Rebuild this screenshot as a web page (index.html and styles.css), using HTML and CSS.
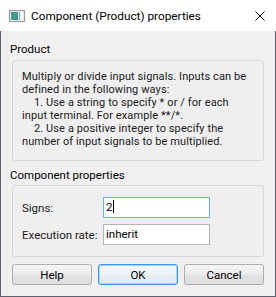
FILE: index.html
```html
<!DOCTYPE html>
<html lang="en">
<head>
  <meta charset="UTF-8">
  <title>Component (Product) properties</title>
  <link rel="stylesheet" href="styles.css">
</head>
<body>
  <div class="window">
    <div class="titlebar">
      <svg class="app-icon" width="16" height="12" viewBox="0 0 16 12">
        <defs>
          <linearGradient id="pane" x1="0" y1="0" x2="1" y2="1">
            <stop offset="0" stop-color="#3f8fc0"/>
            <stop offset="0.5" stop-color="#4aa37a"/>
            <stop offset="1" stop-color="#2f7fb0"/>
          </linearGradient>
        </defs>
        <rect x="0.5" y="0.5" width="15" height="11" fill="#e9e9e9" stroke="#9a9a9a"/>
        <rect x="2" y="2" width="7" height="8" fill="url(#pane)"/>
        <rect x="10" y="2" width="4" height="8" fill="#ffffff"/>
        <rect x="10" y="2" width="1" height="8" fill="#6aa0c8"/>
      </svg>
      <span class="title">Component (Product) properties</span>
      <svg class="close" width="10" height="10" viewBox="0 0 10 10">
        <path d="M0.5 0.5 L9.5 9.5 M9.5 0.5 L0.5 9.5" stroke="#000" stroke-width="1"/>
      </svg>
    </div>

    <div class="content">
      <div class="group-label">Product</div>
      <div class="groupbox info">
        <div class="line">Multiply or divide input signals. Inputs can be</div>
        <div class="line">defined in the following ways:</div>
        <div class="line indent">1. Use a string to specify * or / for each</div>
        <div class="line">input terminal. For example **/*.</div>
        <div class="line indent">2. Use a positive integer to specify the</div>
        <div class="line">number of input signals to be multiplied.</div>
      </div>

      <div class="group-label second">Component properties</div>
      <div class="groupbox fields">
        <label class="field-label">Signs:</label>
        <div class="textbox focused">2<span class="caret"></span></div>
        <label class="field-label">Execution rate:</label>
        <div class="textbox">inherit</div>
      </div>

      <div class="buttons">
        <button class="btn">Help</button>
        <button class="btn default">OK</button>
        <button class="btn">Cancel</button>
      </div>
    </div>
  </div>
</body>
</html>
```

FILE: styles.css
```css
* {
  margin: 0;
  padding: 0;
  box-sizing: border-box;
}

body {
  font-family: Roboto, "Noto Sans", Arial, sans-serif;
  font-size: 11.5px;
  color: #000;
  background: #f0f0f0;
}

/* Window frame */
.window {
  width: 276px;
  height: 297px;
  display: flex;
  flex-direction: column;
}

.titlebar {
  height: 31px;
  background: #fff;
  display: flex;
  align-items: center;
  padding-left: 9px;
  padding-right: 11px;
}

.app-icon {
  flex: none;
}

.title {
  margin-left: 6px;
  font-size: 11.8px;
  flex: 1;
}

.close {
  flex: none;
}

.content {
  flex: 1;
  background: #f0f0f0;
  border: 1px solid #5f6170;
  border-top: none;
  padding: 0 11px;
}

/* Group boxes */
.group-label {
  line-height: 15px;
  margin: 11px 0 3px -2px;
}

.group-label.second {
  margin-top: 7px;
  margin-bottom: 2px;
}

.groupbox {
  border: 1px solid #d9d9d9;
  border-radius: 3px;
  background: #efefef;
}

.info {
  height: 101px;
  padding: 10px 9px 0;
  font-size: 11px;
  line-height: 12.9px;
  letter-spacing: 0.1px;
  color: #1a1a1a;
}

.line {
  white-space: nowrap;
}

.indent {
  padding-left: 12px;
}

.fields {
  height: 72px;
  padding: 11px 9px 0;
  display: grid;
  grid-template-columns: 81px 107px;
  grid-template-rows: 21px 21px;
  row-gap: 6px;
  align-items: center;
}

.field-label {
  color: #1a1a1a;
}

.textbox {
  height: 21px;
  background: #fff;
  border: 1px solid #b4b4b4;
  padding-left: 2px;
  line-height: 19px;
}

.textbox.focused {
  border-color: #6eaef0;
}

.caret {
  display: inline-block;
  width: 1px;
  height: 13px;
  background: #000;
  vertical-align: -2px;
  margin-left: 1px;
}

/* Buttons */
.buttons {
  display: flex;
  gap: 6px;
  margin-top: 7px;
}

.btn {
  width: 80px;
  height: 21px;
  font-family: inherit;
  font-size: 11.5px;
  color: #000;
  border: 1px solid #acacac;
  border-radius: 3px;
  background: linear-gradient(#f6f6f6, #ebebeb 50%, #e3e3e3 51%, #dedede);
}

.btn.default {
  border-color: #3399ff;
  box-shadow: inset 0 0 0 1px #a9d4ff;
  background: linear-gradient(#f6f9fc, #eef3f8 50%, #e6edf4 51%, #e2e9f0);
}
```
